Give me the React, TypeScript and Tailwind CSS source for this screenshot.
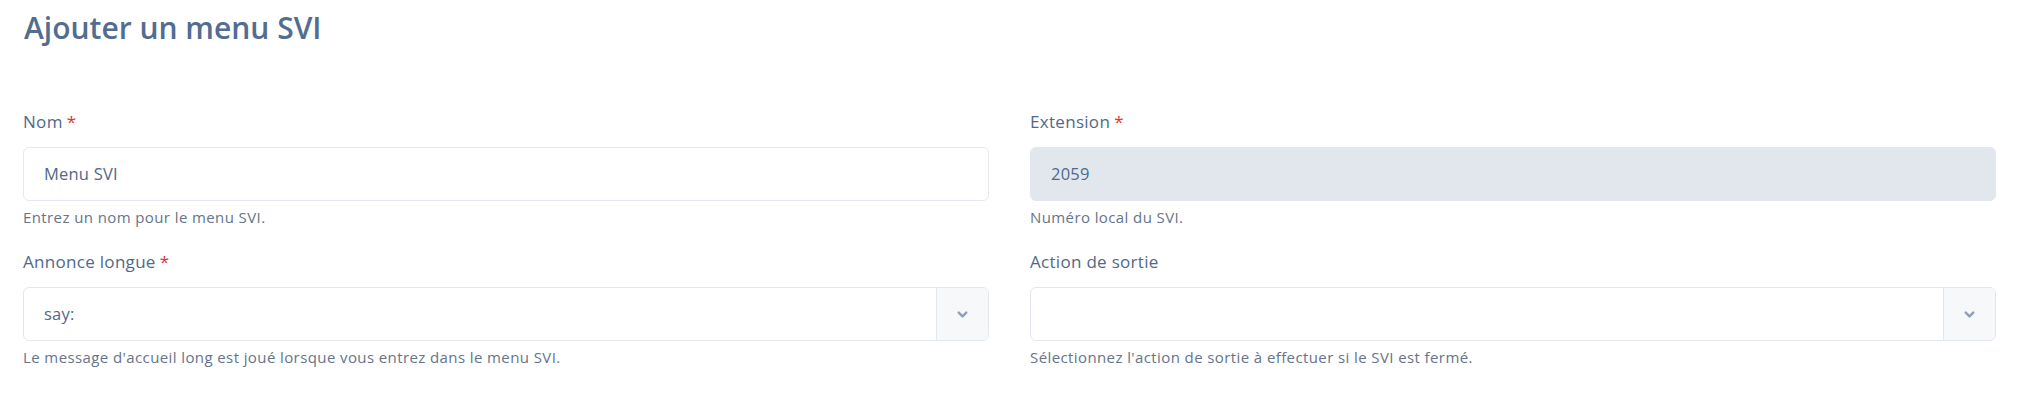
import { ChevronDown } from "lucide-react";

const FONT = { fontFamily: "'Open Sans', Lato, sans-serif" };

function Label({ text, required }: { text: string; required?: boolean }) {
  return (
    <label className="block pt-[3px] text-[17px] leading-[24px] tracking-[0.3px] text-[#50698a]">
      {text}
      {required && <span className="ml-[4px] text-[#e3342f]">*</span>}
    </label>
  );
}

function Help({ text }: { text: string }) {
  return <p className="mt-[6px] text-[15px] leading-[20px] tracking-[0.4px] text-[#66748a]">{text}</p>;
}

function TextInput({ value, disabled }: { value: string; disabled?: boolean }) {
  return (
    <div
      className={`mt-[13px] h-[54px] flex items-center px-[20px] rounded-[6px] border text-[16.5px] tracking-[0.2px] text-[#50698a] ${
        disabled ? "bg-[#e2e7ed] border-[#e2e7ed]" : "bg-white border-[#e5e9ef]"
      }`}
    >
      {value}
    </div>
  );
}

function Select({ value }: { value: string }) {
  return (
    <div className="mt-[13px] h-[54px] flex rounded-[6px] border border-[#e2e7ee] bg-white overflow-hidden">
      <div className="flex-1 flex items-center px-[20px] text-[16.5px] tracking-[0.2px] text-[#50698a]">{value}</div>
      <div className="w-[52px] flex items-center justify-center border-l border-[#e2e7ee] bg-[#f6f8fa]">
        <ChevronDown className="w-[15px] h-[15px] text-[#8da2ba]" strokeWidth={4} />
      </div>
    </div>
  );
}

export default function App() {
  return (
    <div className="w-full h-[420px] bg-white pl-[23px] pr-[36px] pt-[8px]" style={FONT}>
      <h1 className="text-[30px] leading-[40px] font-semibold text-[#536d90] pl-[1px]">Ajouter un menu SVI</h1>
      <div className="grid grid-cols-2 gap-x-[41px] gap-y-[20px] mt-[59px]">
        <div>
          <Label text="Nom" required />
          <TextInput value="Menu SVI" />
          <Help text="Entrez un nom pour le menu SVI." />
        </div>
        <div>
          <Label text="Extension" required />
          <TextInput value="2059" disabled />
          <Help text="Numéro local du SVI." />
        </div>
        <div>
          <Label text="Annonce longue" required />
          <Select value="say:" />
          <Help text="Le message d'accueil long est joué lorsque vous entrez dans le menu SVI." />
        </div>
        <div>
          <Label text="Action de sortie" />
          <Select value="" />
          <Help text="Sélectionnez l'action de sortie à effectuer si le SVI est fermé." />
        </div>
      </div>
    </div>
  );
}
